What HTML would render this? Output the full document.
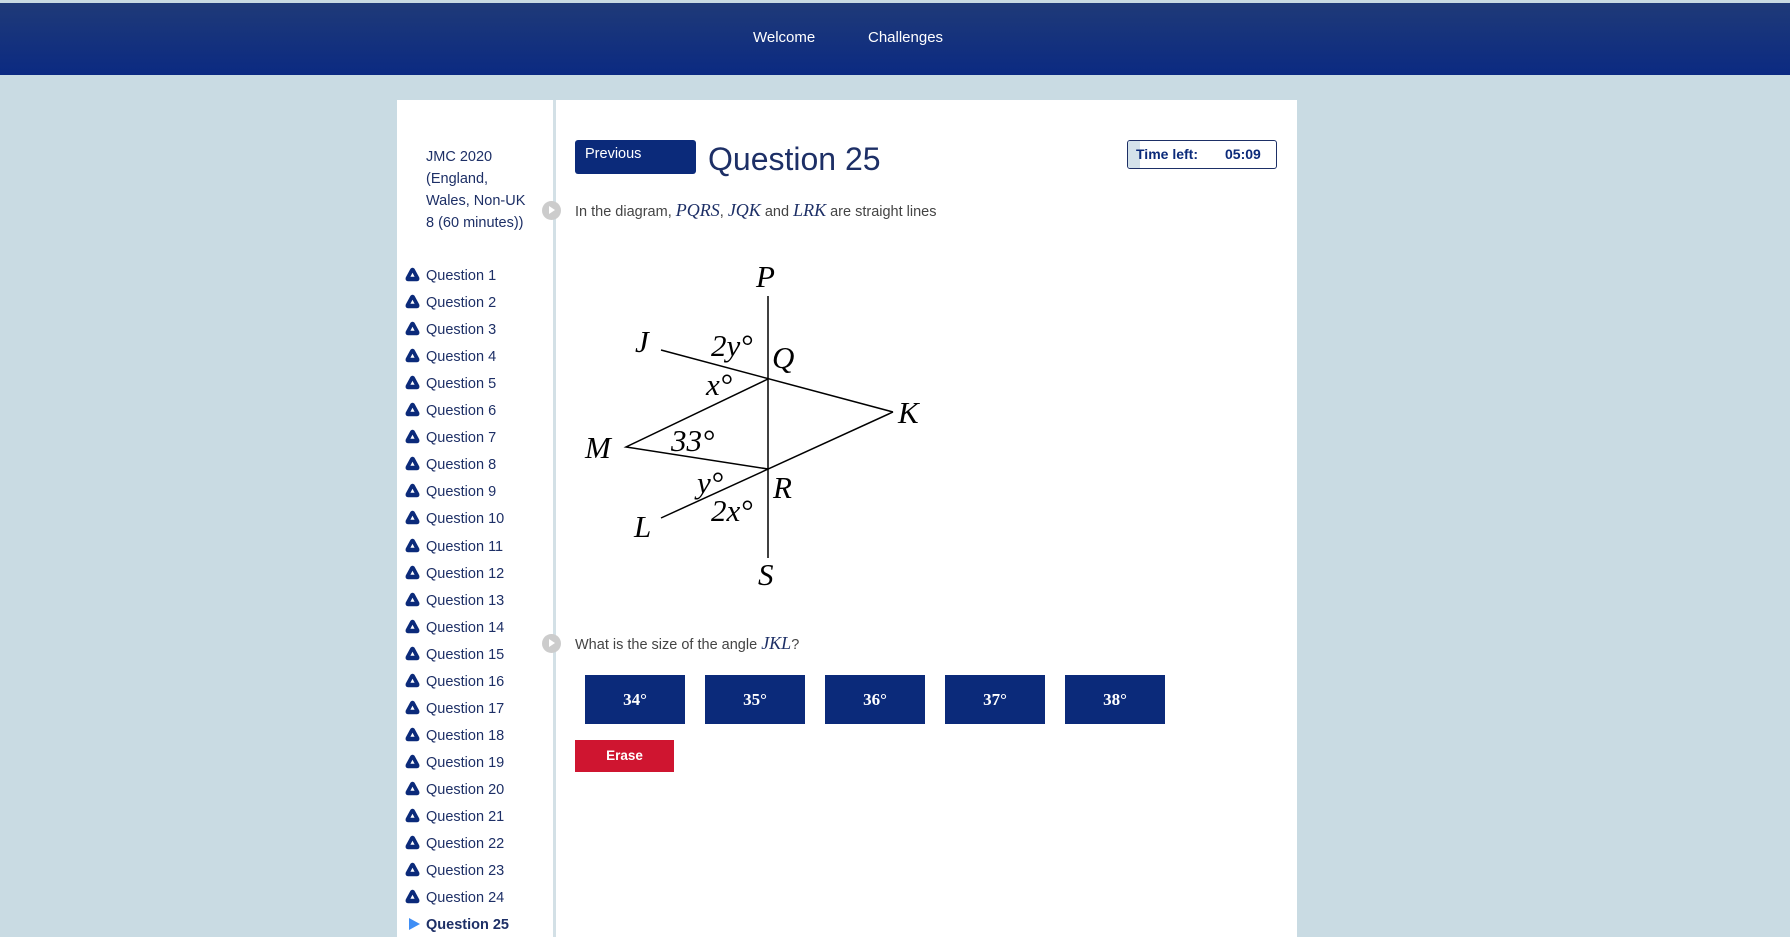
<!DOCTYPE html>
<html><head><meta charset="utf-8"><style>
*{margin:0;padding:0;box-sizing:border-box}
body{width:1790px;height:937px;overflow:hidden;background:#c9dbe3;font-family:"Liberation Sans",sans-serif;position:relative;color:#333}
.hdr{position:absolute;left:0;top:3px;width:1790px;height:72px;background:linear-gradient(#1f3a78,#0b2a82)}
.hdr span{position:absolute;top:26px;color:#fff;font-size:15px}
.panel{position:absolute;left:397px;top:100px;width:900px;height:837px;background:#fff}
.div{position:absolute;left:553px;top:100px;width:3px;height:837px;background:#d3e0e6}
.abs{position:absolute}
.side{left:426px;top:146px;font-size:14.5px;line-height:22px;color:#1d2f66}
.q{position:absolute;left:426px;font-size:14.5px;color:#1d2f66}
.ic{position:absolute;left:405px;width:15px;height:15px}
.btn{position:absolute;background:#0b2a7a;color:#fff}
.ans{position:absolute;top:675px;width:100px;height:49px;background:#0b2a7a;color:#fff;font-family:"Liberation Serif",serif;font-weight:bold;font-size:17px;text-align:center;line-height:49px}
.mi{font-family:"Liberation Serif",serif;font-style:italic;color:#1d2f66;font-size:18px}
.circ{position:absolute;left:542px;width:19px;height:19px;border-radius:50%;background:#ccc}
.circ:after{content:"";position:absolute;left:7px;top:5px;border-left:6px solid #fff;border-top:4.5px solid transparent;border-bottom:4.5px solid transparent}
svg text{font-family:"Liberation Serif",serif;font-style:italic;font-size:31px;fill:#000}
</style></head><body>
<div class="hdr"><span style="left:753px">Welcome</span><span style="left:868px">Challenges</span></div>
<div class="panel"></div>
<div class="div"></div>
<div class="abs side">JMC 2020<br>(England,<br>Wales, Non-UK<br>8 (60 minutes))</div>

<div class="btn" style="left:575px;top:140px;width:121px;height:34px;border-radius:3px;font-size:14.5px;padding:6px 10px">Previous</div>
<div class="abs" style="left:708px;top:141px;font-size:32px;color:#1d2f66">Question 25</div>
<div class="abs" style="left:1127px;top:140px;width:150px;height:29px;border:1px solid #1d2f66;border-radius:3px;overflow:hidden;font-size:14px;font-weight:bold;color:#0b2a7a">
<div style="position:absolute;left:0;top:0;width:12px;height:29px;background:#d4e2ea"></div>
<span style="position:absolute;left:8px;top:5px">Time left:</span><span style="position:absolute;left:97px;top:5px">05:09</span></div>

<div class="circ" style="top:201px"></div>
<div class="abs" style="left:575px;top:200px;font-size:14.5px;color:#444">In the diagram, <span class="mi">PQRS</span>, <span class="mi">JQK</span> and <span class="mi">LRK</span> are straight lines</div>

<svg class="abs" style="left:0;top:0" width="1790" height="937">
<g stroke="#000" stroke-width="1.5" fill="none">
<line x1="768" y1="296" x2="768" y2="558"/>
<line x1="661" y1="350" x2="893" y2="412"/>
<polyline points="768,379 626,447 768,469"/>
<line x1="661" y1="518" x2="893" y2="412"/>
</g>
<text x="756" y="287">P</text>
<text x="635" y="352">J</text>
<text x="711" y="356">2y°</text>
<text x="772" y="368">Q</text>
<text x="706" y="395">x°</text>
<text x="898" y="423">K</text>
<text x="585" y="458">M</text>
<text x="671" y="451">33°</text>
<text x="697" y="493">y°</text>
<text x="773" y="498">R</text>
<text x="711" y="521">2x°</text>
<text x="634" y="537">L</text>
<text x="758" y="585">S</text>
</svg>

<div class="circ" style="top:634px"></div>
<div class="abs" style="left:575px;top:633px;font-size:14.5px;color:#444">What is the size of the angle <span class="mi">JKL</span>?</div>

<div class="ans" style="left:585px">34°</div>
<div class="ans" style="left:705px">35°</div>
<div class="ans" style="left:825px">36°</div>
<div class="ans" style="left:945px">37°</div>
<div class="ans" style="left:1065px">38°</div>
<div class="abs" style="left:575px;top:740px;width:99px;height:32px;background:#cf1530;color:#fff;font-weight:bold;font-size:13.5px;text-align:center;line-height:32px">Erase</div>

<div id="qs"></div>
<script>
var tri='<path d="M7.5 0.8 Q9 0.8 10 2.6 L14.2 10.4 Q15.2 13.8 12 14.2 L3 14.2 Q-0.2 13.8 0.8 10.4 L5 2.6 Q6 0.8 7.5 0.8Z" fill="#0b2a7a"/><path d="M7.5 5.8 L9.6 9.8 L5.4 9.8Z" fill="#fff"/>';
var h='';for(var i=1;i<=25;i++){var y=268+(i-1)*27.05;
if(i<25)h+='<svg class="ic" style="top:'+(y-1)+'px" viewBox="0 0 15 15">'+tri+'</svg>';
else h+='<div style="position:absolute;left:409px;top:'+(y+1)+'px;border-left:11px solid #3f8ef5;border-top:6.5px solid transparent;border-bottom:6.5px solid transparent"></div>';
h+='<div class="q" style="top:'+y+'px;'+(i==25?'font-weight:bold':'')+'">Question '+i+'</div>';}
document.getElementById('qs').innerHTML=h;
</script>
</body></html>
